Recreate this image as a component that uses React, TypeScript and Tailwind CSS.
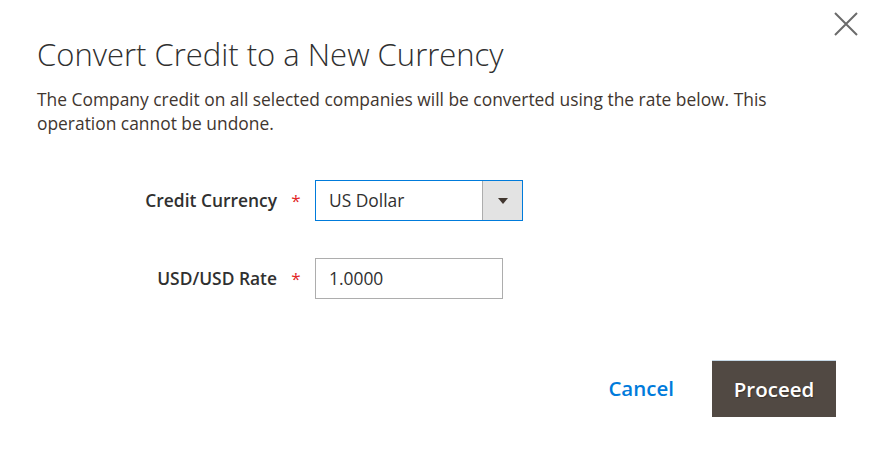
import React from 'react';

export default function App() {
  return (
    <div className="relative w-[872px] h-[452px] bg-white text-[#303030]" style={{ fontFamily: '"Open Sans", sans-serif' }}>
      <button className="absolute right-[12px] top-[10px] w-[28px] h-[28px] flex items-center justify-center" aria-label="Close">
        <svg width="26" height="26" viewBox="0 0 26 26" fill="none" stroke="#6b6b6b" strokeWidth="2">
          <path d="M2 2 L24 24 M24 2 L2 24" />
        </svg>
      </button>

      <div className="pl-[37px] pr-[36px] pt-[34px]">
        <h1 className="text-[31px] leading-[40px] font-light text-[#303030]">Convert Credit to a New Currency</h1>
        <p className="mt-[13px] text-[17.4px] leading-[24px] text-[#41362f] max-w-[770px]">
          The Company credit on all selected companies will be converted using the rate below. This operation cannot be undone.
        </p>

        <div className="mt-[45px] flex flex-col gap-[37px]">
          <div className="flex items-center">
            <label className="w-[240px] text-right text-[17.4px] font-semibold text-[#303030]">Credit Currency</label>
            <span className="w-[38px] text-center text-[#e22626] text-[17px]">*</span>
            <div className="flex w-[208px] h-[41px] border border-[#007bdb]">
              <div className="flex-1 flex items-center pl-[13px] text-[17.4px] text-[#303030]">US Dollar</div>
              <div className="w-[40px] bg-[#e3e3e3] border-l border-[#adadad] flex items-center justify-center">
                <svg width="10" height="6" viewBox="0 0 10 6"><path d="M0 0 H10 L5 6 Z" fill="#41362f" /></svg>
              </div>
            </div>
          </div>
          <div className="flex items-center">
            <label className="w-[240px] text-right text-[17.4px] font-semibold text-[#303030]">USD/USD Rate</label>
            <span className="w-[38px] text-center text-[#e22626] text-[17px]">*</span>
            <div className="w-[188px] h-[41px] border border-[#adadad] flex items-center pl-[13px] text-[17.4px] text-[#303030]">1.0000</div>
          </div>
        </div>

        <div className="mt-[61px] flex justify-end items-center">
          <button className="text-[20.5px] font-semibold text-[#007bdb] mr-[38px]">Cancel</button>
          <button className="w-[124px] h-[57px] bg-[#514943] border-t border-[#c6d8e6] text-white text-[20.5px] font-semibold" style={{ textShadow: '1px 1px 1px rgba(0,0,0,0.3)' }}>Proceed</button>
        </div>
      </div>
    </div>
  );
}
